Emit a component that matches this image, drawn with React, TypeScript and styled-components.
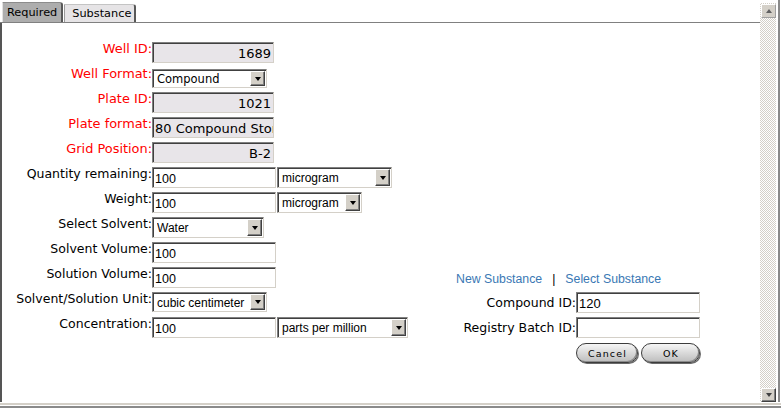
import React from 'react';
import styled, { createGlobalStyle, css } from 'styled-components';

const GlobalStyle = createGlobalStyle`
  html, body { margin: 0; padding: 0; background: #fff; }
  body { font-family: "DejaVu Sans", Verdana, sans-serif; }
  * { box-sizing: border-box; }
`;

const Frame = styled.div`
  width: 781px;
  height: 408px;
  display: flex;
  flex-direction: column;
  background: #fff;
  overflow: hidden;
`;

const Main = styled.div`
  display: flex;
  height: 402px;
`;

const LeftCol = styled.div`
  width: 760px;
  display: flex;
  flex-direction: column;
`;

const TabStrip = styled.div`
  height: 23px;
  flex: none;
  display: flex;
  align-items: flex-end;
  padding-left: 2px;
  border-bottom: 1px solid #808080;
`;

const Tab = styled.div<{ $active?: boolean }>`
  height: ${(p) => (p.$active ? 20 : 18)}px;
  margin-left: ${(p) => (p.$active ? 0 : 1)}px;
  padding: ${(p) => (p.$active ? '0 4px 0 4px' : '0 3px 0 7px')};
  display: flex;
  align-items: center;
  font-size: 11.3px;
  color: #000;
  background: ${(p) => (p.$active ? '#adadad' : '#e6e4e6')};
  border-top: 1px solid ${(p) => (p.$active ? '#8c8c8c' : '#c4c4c4')};
  border-left: 1px solid ${(p) => (p.$active ? '#e2e2e2' : '#9a9a9a')};
  border-right: 2px solid #585858;
  border-top-right-radius: 3px;
`;

const Pane = styled.div`
  flex: 1;
  display: flex;
  align-items: flex-start;
  border-left: 2px solid #555;
`;

const LeftForm = styled.div`
  width: 408px;
  flex: none;
  padding-top: 19px;
  display: flex;
  flex-direction: column;
`;

const FormRow = styled.div`
  display: flex;
  align-items: flex-start;
  height: 25px;
`;

const Label = styled.div<{ $required?: boolean; $w: number; $pt?: number }>`
  width: ${(p) => p.$w}px;
  flex: none;
  padding-top: ${(p) => p.$pt ?? 0}px;
  text-align: right;
  font-size: ${(p) => (p.$required ? 12.9 : 12.5)}px;
  line-height: 14px;
  white-space: nowrap;
  color: ${(p) => (p.$required ? '#ff0000' : '#000')};
`;

const sunken = css`
  border-style: solid;
  border-width: 1px;
  border-color: #808080 #d4d0c8 #d4d0c8 #808080;
  box-shadow: inset 1px 1px 0 #404040;
`;

const TextField = styled.input<{ $ro?: boolean; $w: number; $align?: 'left' | 'right'; $big?: boolean }>`
  ${sunken};
  width: ${(p) => p.$w}px;
  height: 21px;
  margin: 0;
  padding: ${(p) => (p.$align === 'right' ? '2px 2px 0 0' : '2px 0 0 2px')};
  background: ${(p) => (p.$ro ? '#e8e5e9' : '#fff')};
  text-align: ${(p) => p.$align ?? 'left'};
  font-family: ${(p) => (p.$ro ? '"DejaVu Sans", Verdana, sans-serif' : '"Liberation Sans", Arial, sans-serif')};
  font-size: ${(p) => (p.$ro ? 13 : p.$big ? 13 : 12.5)}px;
  color: #000;
  outline: none;
  overflow: hidden;
`;

const SelectBox = styled.div<{ $w: number; $h: number; $mt?: number; $ml?: number }>`
  ${sunken};
  width: ${(p) => p.$w}px;
  height: ${(p) => p.$h}px;
  margin-top: ${(p) => p.$mt ?? 0}px;
  margin-left: ${(p) => p.$ml ?? 0}px;
  padding-left: 4px;
  display: flex;
  align-items: center;
  background: #fff;
`;

const SelectText = styled.span<{ $verdana?: boolean }>`
  flex: 1;
  white-space: nowrap;
  overflow: hidden;
  font-family: ${(p) => (p.$verdana ? '"DejaVu Sans", Verdana, sans-serif' : '"Liberation Sans", Arial, sans-serif')};
  font-size: ${(p) => (p.$verdana ? 11.5 : 12)}px;
  color: #000;
  padding-top: 1px;
`;

const DropButton = styled.span`
  width: 15px;
  flex: none;
  align-self: stretch;
  margin: 1px 1px 1px 0;
  background: #d4d0c8;
  border: 1px solid;
  border-color: #fff #404040 #404040 #fff;
  box-shadow: inset -1px -1px 0 #808080;
  display: flex;
  align-items: center;
  justify-content: center;
`;

const Arrow = styled.span<{ $up?: boolean; $color?: string }>`
  width: 0;
  height: 0;
  border-left: 3.5px solid transparent;
  border-right: 3.5px solid transparent;
  ${(p) =>
    p.$up
      ? `border-bottom: 4px solid ${p.$color ?? '#000'};`
      : `border-top: 4px solid ${p.$color ?? '#000'};`}
`;

const RightForm = styled.div`
  margin: 248px 0 0 20px;
  width: 270px;
  flex: none;
  display: flex;
  flex-direction: column;
`;

const LinkRow = styled.div`
  height: 16px;
  margin-bottom: 5px;
  padding-left: 26px;
  display: flex;
  align-items: center;
  font-family: "Liberation Sans", Arial, sans-serif;
  font-size: 12.3px;
`;

const Link = styled.a`
  color: #3a78b4;
  text-decoration: none;
  cursor: pointer;
`;

const Sep = styled.span`
  margin: 0 10px;
  color: #000;
`;

const ButtonRow = styled.div`
  margin-top: 1px;
  display: flex;
  justify-content: flex-end;
  gap: 3px;
`;

const PillButton = styled.button<{ $w: number }>`
  width: ${(p) => p.$w}px;
  height: 20px;
  padding: 0 0 0 1px;
  border: 1px solid #3c3c3c;
  border-radius: 10px;
  background: linear-gradient(#f6f6f6 0%, #dcdcdc 45%, #bdbdbd 100%);
  box-shadow: inset -1px -1px 0 #8c8c8c, 1px 1px 0 #6a6a6a;
  font-family: "DejaVu Sans", Verdana, sans-serif;
  font-size: 9.5px;
  letter-spacing: 1.1px;
  color: #000;
`;

const ScrollBar = styled.div`
  width: 16px;
  flex: none;
  margin-top: 3px;
  display: flex;
  flex-direction: column;
  justify-content: space-between;
  background-color: #fff;
  background-image: repeating-conic-gradient(#d4d0c8 0 25%, #fff 0 50%);
  background-size: 2px 2px;
`;

const ScrollButton = styled.div<{ $down?: boolean }>`
  width: 15px;
  height: 14px;
  margin: ${(p) => (p.$down ? '0' : '1px')} 0 0 1px;
  background: #d4d0c8;
  border: 1px solid;
  border-color: ${(p) => (p.$down ? '#fff #404040 #404040 #fff' : '#fff #a0a0a0 #a0a0a0 #fff')};
  box-shadow: ${(p) => (p.$down ? 'inset -1px -1px 0 #808080' : 'none')};
  display: flex;
  align-items: center;
  justify-content: center;
`;

const RightEdge = styled.div`
  width: 5px;
  flex: none;
  background: linear-gradient(to right, #fff 0 2px, #8a8a8a 2px 4px, #fff 4px);
`;

const BottomEdge = styled.div`
  height: 6px;
  flex: none;
  background: linear-gradient(#fff 0 1px, #d4d0c8 1px 3px, #fff 3px 4px, #8a8a8a 4px 6px);
`;

type SelProps = { w: number; h?: number; mt?: number; ml?: number; text: string; verdana?: boolean };

const Select: React.FC<SelProps> = ({ w, h = 21, mt, ml, text, verdana }) => (
  <SelectBox $w={w} $h={h} $mt={mt} $ml={ml}>
    <SelectText $verdana={verdana}>{text}</SelectText>
    <DropButton>
      <Arrow />
    </DropButton>
  </SelectBox>
);

const Row: React.FC<{ label: string; required?: boolean; children: React.ReactNode }> = ({
  label,
  required,
  children,
}) => (
  <FormRow>
    <Label $w={150} $required={required}>
      {label}
    </Label>
    {children}
  </FormRow>
);

export default function App() {
  return (
    <>
      <GlobalStyle />
      <Frame>
        <Main>
          <LeftCol>
            <TabStrip>
              <Tab $active>Required</Tab>
              <Tab>Substance</Tab>
            </TabStrip>
            <Pane>
              <LeftForm>
                <Row label="Well ID:" required>
                  <TextField $ro $w={122} $align="right" readOnly value="1689" />
                </Row>
                <Row label="Well Format:" required>
                  <Select w={115} h={19} mt={2} text="Compound" verdana />
                </Row>
                <Row label="Plate ID:" required>
                  <TextField $ro $w={122} $align="right" readOnly value="1021" />
                </Row>
                <Row label="Plate format:" required>
                  <TextField $ro $w={122} readOnly value="80 Compound Storage" />
                </Row>
                <Row label="Grid Position:" required>
                  <TextField $ro $w={122} $align="right" readOnly value="B-2" />
                </Row>
                <Row label="Quantity remaining:">
                  <TextField $w={124} readOnly value="100" />
                  <Select w={115} ml={1} text="microgram" />
                </Row>
                <Row label="Weight:">
                  <TextField $w={124} readOnly value="100" />
                  <Select w={85} ml={1} text="microgram" />
                </Row>
                <Row label="Select Solvent:">
                  <Select w={112} text="Water" />
                </Row>
                <Row label="Solvent Volume:">
                  <TextField $w={124} readOnly value="100" />
                </Row>
                <Row label="Solution Volume:">
                  <TextField $w={124} readOnly value="100" />
                </Row>
                <Row label="Solvent/Solution Unit:">
                  <Select w={115} h={20} text="cubic centimeter" />
                </Row>
                <Row label="Concentration:">
                  <TextField $w={124} readOnly value="100" />
                  <Select w={131} ml={1} text="parts per million" />
                </Row>
              </LeftForm>
              <RightForm>
                <LinkRow>
                  <Link>New Substance</Link>
                  <Sep>|</Sep>
                  <Link>Select Substance</Link>
                </LinkRow>
                <FormRow>
                  <Label $w={146} $pt={4}>
                    Compound ID:
                  </Label>
                  <TextField $w={124} $big readOnly value="120" />
                </FormRow>
                <FormRow>
                  <Label $w={146} $pt={4}>
                    Registry Batch ID:
                  </Label>
                  <TextField $w={124} $big readOnly value="" />
                </FormRow>
                <ButtonRow>
                  <PillButton $w={62}>Cancel</PillButton>
                  <PillButton $w={59}>OK</PillButton>
                </ButtonRow>
              </RightForm>
            </Pane>
          </LeftCol>
          <ScrollBar>
            <ScrollButton>
              <Arrow $up $color="#606060" />
            </ScrollButton>
            <ScrollButton $down>
              <Arrow $color="#404040" />
            </ScrollButton>
          </ScrollBar>
          <RightEdge />
        </Main>
        <BottomEdge />
      </Frame>
    </>
  );
}
